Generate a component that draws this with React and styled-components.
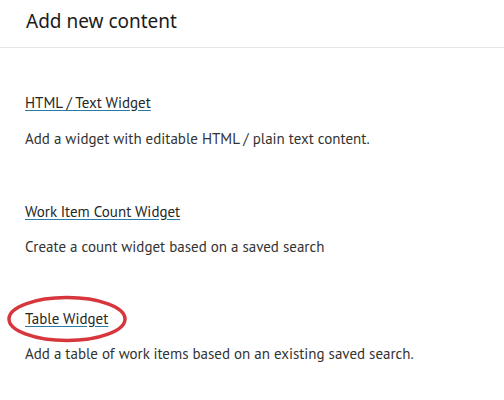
import React from "react";
import styled, { createGlobalStyle } from "styled-components";

const Global = createGlobalStyle`
  html, body { margin: 0; padding: 0; background: #fff; }
  body { font-family: "PT Sans", "Lato", "Noto Sans", sans-serif; color: #333; }
`;

const Page = styled.div`
  width: 504px;
  height: 400px;
  background: #fff;
  overflow: hidden;
`;

const Header = styled.header`
  height: 48px;
  border-bottom: 1px solid #e6e6e6;
  display: flex;
  align-items: flex-start;
  padding-left: 26px;
  box-sizing: border-box;
`;

const Title = styled.h1`
  margin: 8px 0 0;
  font-family: "Noto Sans", "Open Sans", sans-serif;
  font-weight: 400;
  font-size: 19px;
  line-height: 26px;
  color: #1b1b1b;
`;

const Content = styled.main`
  display: flex;
  flex-direction: column;
  padding: 44px 0 0 25px;
`;

const Item = styled.section`
  display: flex;
  flex-direction: column;
  gap: ${(p) => p.$gap}px;
  margin-bottom: ${(p) => p.$after}px;
`;

const LinkWrap = styled.div`
  position: relative;
  align-self: flex-start;
`;

const Link = styled.a`
  font-size: 15px;
  line-height: 20px;
  color: #262626;
  text-decoration: underline;
  text-decoration-color: #2a7aa6;
  text-underline-offset: 2px;
  cursor: pointer;
`;

const Desc = styled.p`
  margin: 0;
  font-size: 15px;
  line-height: 20px;
  color: #333;
`;

const Circle = styled.svg`
  position: absolute;
  left: -19px;
  top: -13px;
  pointer-events: none;
`;

const items = [
  { title: "HTML / Text Widget", desc: "Add a widget with editable HTML / plain text content.", gap: 16, after: 52 },
  { title: "Work Item Count Widget", desc: "Create a count widget based on a saved search", gap: 15, after: 51 },
  { title: "Table Widget", desc: "Add a table of work items based on an existing saved search.", gap: 15, after: 0, circled: true },
];

export default function App() {
  return (
    <Page>
      <Global />
      <Header>
        <Title>Add new content</Title>
      </Header>
      <Content>
        {items.map((it) => (
          <Item key={it.title} $gap={it.gap} $after={it.after}>
            <LinkWrap>
              <Link href="#">{it.title}</Link>
              {it.circled && (
                <Circle width="124" height="50" viewBox="0 0 124 50">
                  <ellipse cx="61" cy="24" rx="58" ry="21.5" fill="none" stroke="#d7373c" strokeWidth="3.5" />
                </Circle>
              )}
            </LinkWrap>
            <Desc>{it.desc}</Desc>
          </Item>
        ))}
      </Content>
    </Page>
  );
}
